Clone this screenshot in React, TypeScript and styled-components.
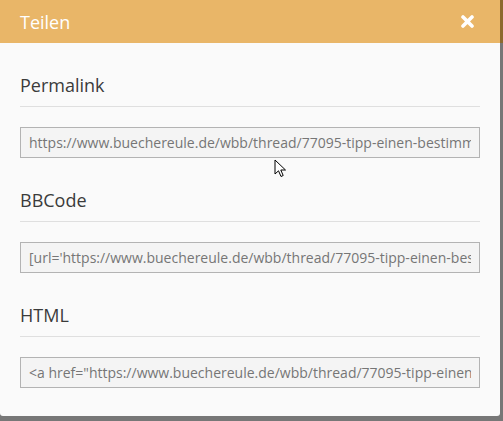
import React from "react";
import styled, { createGlobalStyle } from "styled-components";

const Global = createGlobalStyle`
  html, body { margin: 0; padding: 0; background: #777777; }
  body { font-family: "Open Sans", "Noto Sans", sans-serif; }
`;

const Screen = styled.div`
  display: grid;
  grid-template-columns: 500px 1fr;
  width: 503px;
  height: 421px;
  overflow: hidden;
  background: #777777;
  position: relative;
`;

const Backdrop = styled.div`
  display: flex;
  flex-direction: column;
`;

const BackdropTop = styled.div`
  height: 43px;
  background: #8c6a2e;
`;

const Dialog = styled.div`
  width: 500px;
  height: 416px;
  background: #fafafa;
  border-radius: 0 0 3px 3px;
  display: flex;
  flex-direction: column;
  overflow: hidden;
`;

const Header = styled.div`
  height: 43px;
  background: #e9b668;
  display: flex;
  align-items: center;
  justify-content: space-between;
  padding: 0 26px 0 20px;
  box-sizing: border-box;
`;

const Title = styled.span`
  color: #ffffff;
  font-size: 18px;
  line-height: 24px;
`;

const Close = styled.svg`
  width: 13px;
  height: 13px;
  display: block;
`;

const Body = styled.div`
  padding: 30px 20px 0 20px;
  display: flex;
  flex-direction: column;
  gap: 30px;
`;

const Section = styled.section`
  display: flex;
  flex-direction: column;
  gap: 20px;
`;

const Heading = styled.h2`
  margin: 0;
  font-weight: 400;
  font-size: 18px;
  line-height: 24px;
  color: #3b3b3b;
  padding-bottom: 9px;
  border-bottom: 1px solid #dfdfdf;
`;

const Field = styled.input`
  box-sizing: border-box;
  width: 460px;
  height: 31px;
  margin: 0;
  border: 1px solid #b3b3b3;
  background: #f4f4f4;
  padding: 0 8px;
  font-family: "Open Sans", "Noto Sans", sans-serif;
  font-size: 14px;
  color: #767676;
  outline: none;
  border-radius: 0;
`;

const Cursor = styled.svg`
  position: absolute;
  left: 274px;
  top: 159px;
  width: 13px;
  height: 20px;
`;

const url = "https://www.buechereule.de/wbb/thread/77095-tipp-einen-bestimmten-buchstaben/";

const items = [
  { label: "Permalink", value: url },
  { label: "BBCode", value: `[url='${url}']Tipp einen bestimmten Buchstaben[/url]` },
  { label: "HTML", value: `<a href="${url}">Tipp einen bestimmten Buchstaben</a>` },
];

export default function App() {
  return (
    <>
      <Global />
      <Screen>
        <Dialog>
          <Header>
            <Title>Teilen</Title>
            <Close viewBox="0 0 13 13">
              <path d="M2 2 L11 11 M11 2 L2 11" stroke="#ffffff" strokeWidth="3.6" strokeLinecap="round" />
            </Close>
          </Header>
          <Body>
            {items.map((it) => (
              <Section key={it.label}>
                <Heading>{it.label}</Heading>
                <Field readOnly value={it.value} />
              </Section>
            ))}
          </Body>
        </Dialog>
        <Backdrop>
          <BackdropTop />
        </Backdrop>
        <Cursor viewBox="0 0 13 20">
          <path
            d="M1 1 L1 15 L4.5 11.8 L7 17.5 L9.2 16.5 L6.8 11 L11.5 11 Z"
            fill="#ffffff"
            stroke="#000000"
            strokeWidth="1"
            strokeLinejoin="miter"
          />
        </Cursor>
      </Screen>
    </>
  );
}
